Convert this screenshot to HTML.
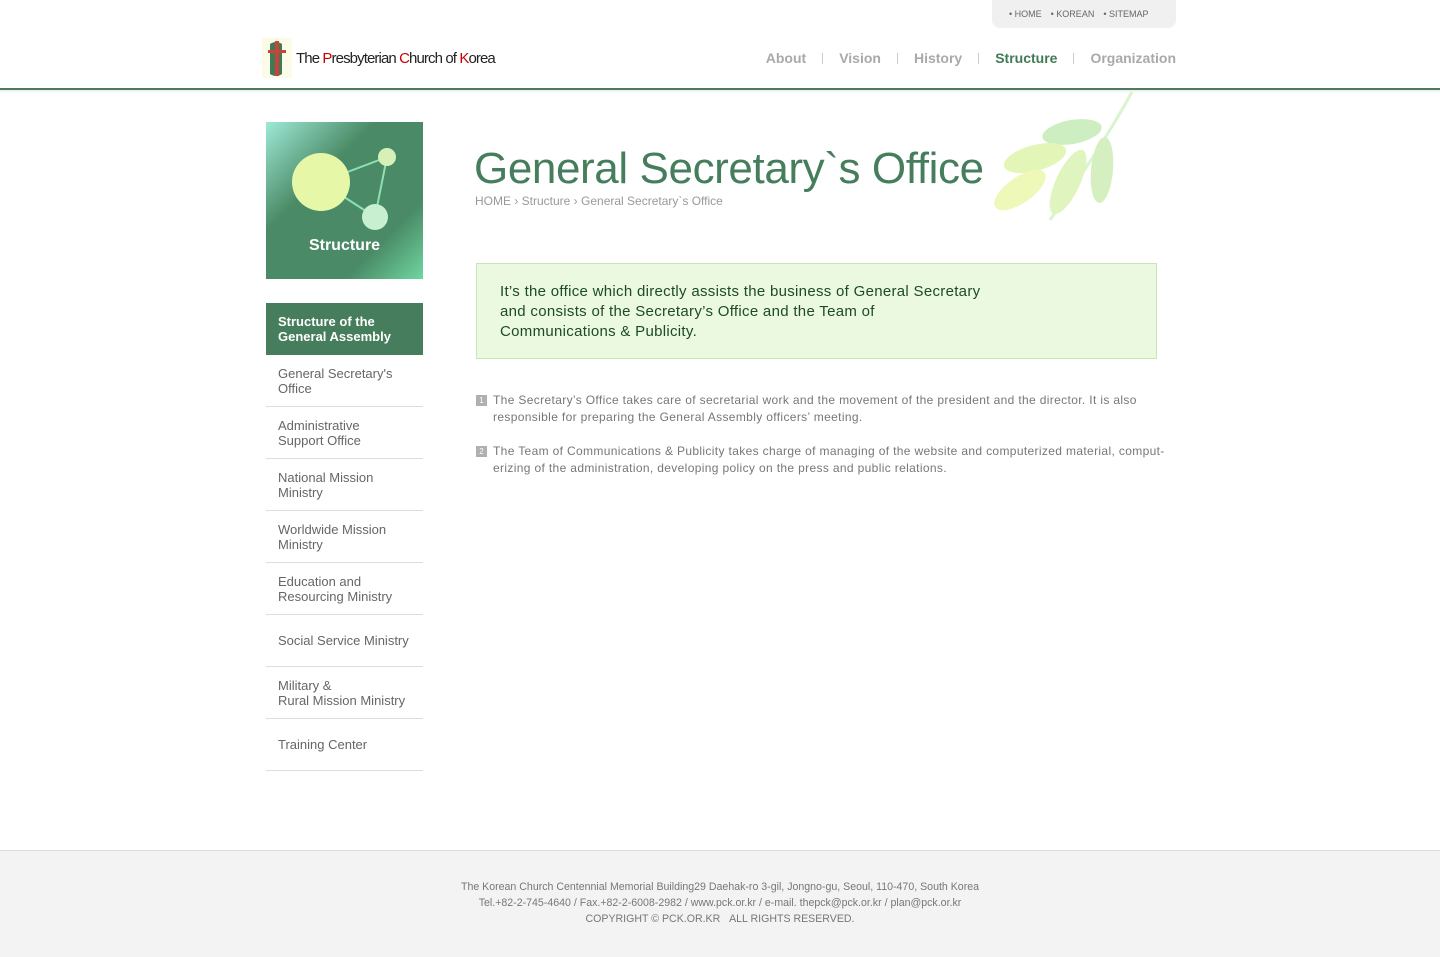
<!DOCTYPE html>
<html><head><meta charset="utf-8">
<style>
*{margin:0;padding:0;box-sizing:border-box}
body{width:1440px;height:957px;background:#fff;font-family:"Liberation Sans",sans-serif;position:relative;overflow:hidden}
.abs{position:absolute}
.util{left:992px;top:0;width:184px;height:28px;background:#f0f0f0;border-radius:0 0 8px 8px;font-size:9px;color:#666;padding-top:9px;padding-left:17px}
.util span{margin-right:9px}
.nav{top:50px;right:264px;font-size:14px;font-weight:bold;color:#a9a9a9}
.nav i{display:inline-block;width:1px;height:11px;background:#ccc;margin:0 16px;vertical-align:-1px}
.hr{left:0;top:88px;width:1440px;height:2px;background:#4f7a60}
.menu{left:266px;width:157px}
.menu div{border-bottom:1px solid #ddd;height:52px;font-size:13px;color:#666;padding-left:12px;display:flex;align-items:center;line-height:15px}
.foot{left:0;top:850px;width:1440px;height:107px;background:#f3f3f3;border-top:1px solid #ddd;text-align:center;font-size:10.6px;color:#777;line-height:16px;padding-top:28px}
.p{font-size:12px;color:#777;line-height:17px;left:493px;width:720px;letter-spacing:0.35px}
.num{position:absolute;left:-17px;top:3px;width:11px;height:11px;background:#b0b0b0;color:#fff;font-size:8px;text-align:center;line-height:11px;letter-spacing:0}
</style></head><body>
<div class="abs util"><span>• HOME</span><span>• KOREAN</span><span>• SITEMAP</span></div>
<svg class="abs" style="left:262px;top:38px" width="30" height="40" viewBox="0 0 30 40"><rect width="30" height="40" fill="#fbfbe8"/><path d="M8 6 Q14 2 20 6 L20 36 Q14 40 8 36Z" fill="#3d7a55"/><rect x="13" y="3" width="4" height="35" fill="#c9433a"/><rect x="6" y="12" width="18" height="3" fill="#c9433a"/></svg>
<div class="abs" style="left:296px;top:50px;font-size:15px;color:#222;letter-spacing:-0.9px">The <span style="color:#c00">P</span>resbyterian <span style="color:#c00">C</span>hurch of <span style="color:#c00">K</span>orea</div>
<div class="abs nav">About<i></i>Vision<i></i>History<i></i><span style="color:#3f7a55">Structure</span><i></i>Organization</div>
<div class="abs" style="left:0;top:90px;width:1440px;height:3px;background:linear-gradient(#e8eee9,#fff)"></div>
<div class="abs hr"></div>

<div class="abs" style="left:266px;top:122px;width:157px;height:157px;background:linear-gradient(135deg,#9ee9d6 0%,#4a8a66 35%,#4a8a66 75%,#6fd6a0 100%)">
<svg width="157" height="157"><line x1="55" y1="60" x2="121" y2="35" stroke="#8ee0b0" stroke-width="2"/><line x1="121" y1="35" x2="109" y2="95" stroke="#8ee0b0" stroke-width="2"/><line x1="55" y1="60" x2="109" y2="95" stroke="#8ee0b0" stroke-width="2"/><circle cx="55" cy="60" r="29" fill="#e6f7a8"/><circle cx="121" cy="35" r="9" fill="#d7f0b8"/><circle cx="109" cy="95" r="13" fill="#c8f0d0"/></svg>
<div class="abs" style="left:0;top:115px;width:157px;text-align:center;color:#fff;font-weight:bold;font-size:16px">Structure</div></div>

<div class="abs" style="left:266px;top:303px;width:157px;height:52px;background:#467e5d;color:#fff;font-weight:bold;font-size:13px;padding:11px 12px;line-height:15px">Structure of the<br>General Assembly</div>
<div class="abs menu" style="top:355px">
<div>General Secretary's<br>Office</div><div>Administrative<br>Support Office</div><div>National Mission<br>Ministry</div><div>Worldwide Mission<br>Ministry</div><div>Education and<br>Resourcing Ministry</div><div>Social Service Ministry</div><div>Military &amp;<br>Rural Mission Ministry</div><div>Training Center</div></div>

<svg class="abs" style="left:990px;top:90px" width="150" height="135" viewBox="0 0 150 135"><path d="M142 2 Q110 60 60 130" stroke="#d8f5d0" stroke-width="3" fill="none"/><ellipse cx="82" cy="42" rx="30" ry="12" fill="#cdeec0" transform="rotate(-10 82 42)"/><ellipse cx="45" cy="68" rx="32" ry="13" fill="#e3f6b8" transform="rotate(-15 45 68)"/><ellipse cx="30" cy="100" rx="30" ry="13" fill="#eef8b8" transform="rotate(-35 30 100)"/><ellipse cx="78" cy="92" rx="12" ry="35" fill="#e0f4c0" transform="rotate(25 78 92)"/><ellipse cx="112" cy="80" rx="11" ry="33" fill="#d6efc0" transform="rotate(5 112 80)"/></svg>
<div class="abs" style="left:474px;top:144px;font-size:44px;color:#467e5d;letter-spacing:-0.4px">General Secretary`s Office</div>
<div class="abs" style="left:475px;top:194px;font-size:12px;color:#999">HOME › Structure › General Secretary`s Office</div>

<div class="abs" style="left:476px;top:263px;width:681px;height:96px;background:#eaf9e0;border:1px solid #c6e6b4;padding:18px 23px;font-size:15px;color:#1e4a2a;line-height:20px;letter-spacing:0.3px">It’s the office which directly assists the business of General Secretary<br>and consists of the Secretary’s Office and the Team of<br>Communications &amp; Publicity.</div>

<div class="abs p" style="top:392px"><span class="num">1</span>The Secretary’s Office takes care of secretarial work and the movement of the president and the director. It is also<br>responsible for preparing the General Assembly officers’ meeting.</div>
<div class="abs p" style="top:443px"><span class="num">2</span>The Team of Communications &amp; Publicity takes charge of managing of the website and computerized material, comput-<br>erizing of the administration, developing policy on the press and public relations.</div>

<div class="abs foot">The Korean Church Centennial Memorial Building29 Daehak-ro 3-gil, Jongno-gu, Seoul, 110-470, South Korea<br>Tel.+82-2-745-4640 / Fax.+82-2-6008-2982 / www.pck.or.kr / e-mail. thepck@pck.or.kr / plan@pck.or.kr<br>COPYRIGHT © PCK.OR.KR &nbsp;&nbsp;ALL RIGHTS RESERVED.</div>
</body></html>
